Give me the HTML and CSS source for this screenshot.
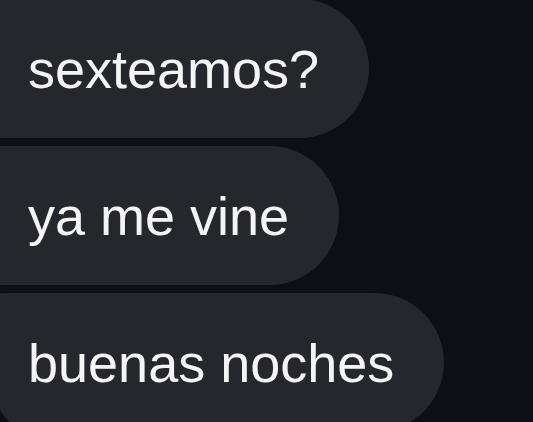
FILE: index.html
```html
<!DOCTYPE html>
<html lang="es">

<head>
  <meta charset="UTF-8">
  <meta name="viewport" content="width=device-width, initial-scale=1.0">
  <title>Mensajes</title>
  <link rel="stylesheet" href="styles.css">
</head>

<body>
  <div class="thread">
    <div class="bubble first">sexteamos?</div>
    <div class="bubble">ya me vine</div>
    <div class="bubble last">buenas noches</div>
  </div>
</body>

</html>
```

FILE: styles.css
```css
html,
body {
  margin: 0;
  padding: 0;
  height: 100%;
  overflow: hidden;
  background-color: #0c0f13;
}

body {
  font-family: "Liberation Sans", Arial, sans-serif;
  color: #f4f4f5;
}

.thread {
  display: flex;
  flex-direction: column;
  align-items: flex-start;
  gap: 8px;
  margin-top: -1px;
  margin-left: -4px;
}

.bubble {
  display: flex;
  align-items: center;
  height: 139px;
  padding: 0 50px 0 32px;
  font-size: 54px;
  line-height: 54px;
  white-space: nowrap;
  background-color: #25272c;
  border-radius: 6px 70px 70px 6px;
}

.bubble.last {
  border-bottom-left-radius: 40px;
}
```
